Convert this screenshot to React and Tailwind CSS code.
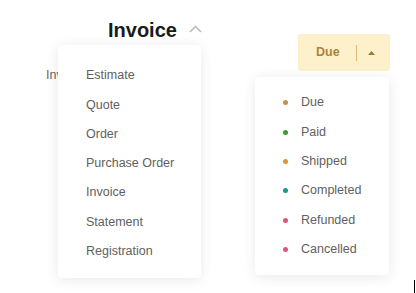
const docTypes = ['Estimate', 'Quote', 'Order', 'Purchase Order', 'Invoice', 'Statement', 'Registration']

const statuses = [
  { label: 'Due', dot: 'bg-[#c98f4f]' },
  { label: 'Paid', dot: 'bg-[#3f9a2c]' },
  { label: 'Shipped', dot: 'bg-[#e3903a]' },
  { label: 'Completed', dot: 'bg-[#17998c]' },
  { label: 'Refunded', dot: 'bg-[#e2557a]' },
  { label: 'Cancelled', dot: 'bg-[#e2557a]' },
]

export default function App() {
  return (
    <div className="relative w-[416px] h-[293px] bg-white overflow-hidden font-['Liberation_Sans',Arial,sans-serif]">
      {/* Title */}
      <div className="absolute left-[108px] top-[18px] flex items-center gap-[12px]">
        <span className="text-[20px] font-bold text-[#1a1a1a] leading-[24px]">Invoice</span>
        <svg width="13" height="8" viewBox="0 0 13 8" fill="none" className="mt-[-2px]">
          <path d="M1 7 L6.5 1.5 L12 7" stroke="#bdbdbd" strokeWidth="1.6" />
        </svg>
      </div>

      {/* Underlying label */}
      <span className="absolute left-[46px] top-[67px] text-[12.5px] text-[#666] leading-[16px]">Invoice</span>

      {/* Doc type menu */}
      <div className="absolute left-[58px] top-[45px] w-[143px] h-[233px] bg-white rounded-[4px] shadow-[0_2px_14px_rgba(0,0,0,0.09)] pt-[16px] flex flex-col">
        {docTypes.map(t => (
          <div key={t} className="h-[29.3px] flex items-center pl-[28px] text-[12.5px] text-[#616161]">{t}</div>
        ))}
      </div>

      {/* Status button */}
      <div className="absolute left-[298px] top-[34px] w-[92px] h-[37px] bg-[#fdf1cc] rounded-[3px] flex items-center">
        <span className="ml-[18px] text-[12.5px] font-bold text-[#a8843c]">Due</span>
        <span className="ml-[16px] w-px h-[16px] bg-[#d9bb73]" />
        <svg width="7" height="4" viewBox="0 0 7 4" className="ml-[11px]">
          <path d="M0 4 L3.5 0 L7 4 Z" fill="#9c7a36" />
        </svg>
      </div>

      {/* Status menu */}
      <div className="absolute left-[255px] top-[77px] w-[134px] h-[198px] bg-white rounded-[4px] shadow-[0_2px_14px_rgba(0,0,0,0.09)] pt-[11px] flex flex-col">
        {statuses.map(s => (
          <div key={s.label} className="h-[29.4px] flex items-center pl-[28px] text-[12.5px] text-[#616161]">
            <span className={`w-[5px] h-[5px] rounded-full ${s.dot}`} />
            <span className="ml-[13px]">{s.label}</span>
          </div>
        ))}
      </div>

      {/* Cursor */}
      <div className="absolute left-[414px] top-[280px] w-px h-[13px] bg-black" />
    </div>
  )
}
